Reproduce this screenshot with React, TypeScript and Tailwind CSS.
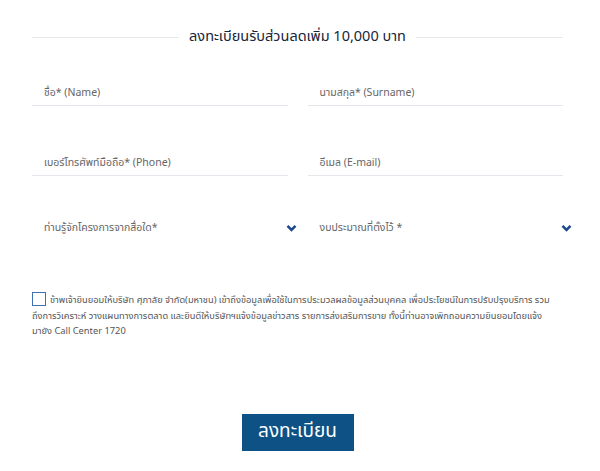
import React from "react";

const Chevron: React.FC = () => (
  <svg width="11" height="8" viewBox="0 0 11 8" className="shrink-0">
    <path d="M1.5 1.8 L5.5 5.8 L9.5 1.8" fill="none" stroke="#1d4a8c" strokeWidth="2.6" />
  </svg>
);

const Field: React.FC<{ label: string }> = ({ label }) => (
  <div className="border-b border-[#e4e7eb] pb-[2px]">
    <p className="pl-[12px] text-[10.5px] leading-[20px] text-[#666]">{label}</p>
  </div>
);

const Select: React.FC<{ label: string }> = ({ label }) => (
  <div className="flex items-center justify-between -mr-[9px]">
    <p className="pl-[12px] text-[10.5px] leading-[20px] text-[#666]">{label}</p>
    <Chevron />
  </div>
);

export default function App() {
  return (
    <div className="h-[471px] w-[600px] bg-white font-['Noto_Sans_Thai','Noto_Sans','Liberation_Sans',sans-serif]">
      <div className="pl-[32px] pr-[37px] pt-[26px]">
        <div className="flex h-[22px] items-center gap-[10px]">
          <div className="h-px flex-1 bg-[#e8e8e8]" />
          <h2 className="text-[14.5px] leading-[22px] text-[#16263a]">ลงทะเบียนรับส่วนลดเพิ่ม 10,000 บาท</h2>
          <div className="h-px flex-1 bg-[#e8e8e8]" />
        </div>

        <div className="mt-[35px] grid grid-cols-2 gap-x-[20px]">
          <Field label="ชื่อ* (Name)" />
          <Field label="นามสกุล* (Surname)" />
        </div>

        <div className="mt-[47px] grid grid-cols-2 gap-x-[20px]">
          <Field label="เบอร์โทรศัพท์มือถือ* (Phone)" />
          <Field label="อีเมล (E-mail)" />
        </div>

        <div className="mt-[42px] grid grid-cols-2 gap-x-[20px]">
          <Select label="ท่านรู้จักโครงการจากสื่อใด*" />
          <Select label="งบประมาณที่ตั้งไว้ *" />
        </div>

        <p className="mt-[51px] whitespace-nowrap text-[9.3px] leading-[15.5px] text-[#555]">
          <span className="mr-[4px] inline-block h-[14px] w-[14px] translate-y-[3px] border border-[#3f6fb4] bg-white" />
          ข้าพเจ้ายินยอมให้บริษัท ศุภาลัย จำกัด(มหาชน) เข้าถึงข้อมูลเพื่อใช้ในการประมวลผลข้อมูลส่วนบุคคล เพื่อประโยชน์ในการปรับปรุงบริการ รวม
          <br />
          ถึงการวิเคราะห์ วางแผนทางการตลาด และยินดีให้บริษัทฯแจ้งข้อมูลข่าวสาร รายการส่งเสริมการขาย ทั้งนี้ท่านอาจเพิกถอนความยินยอมโดยแจ้ง
          <br />
          มายัง Call Center 1720
        </p>

        <div className="mt-[74px] flex justify-center">
          <button className="h-[37px] w-[112px] bg-[#0e5285] text-[19px] text-white">ลงทะเบียน</button>
        </div>
      </div>
    </div>
  );
}
